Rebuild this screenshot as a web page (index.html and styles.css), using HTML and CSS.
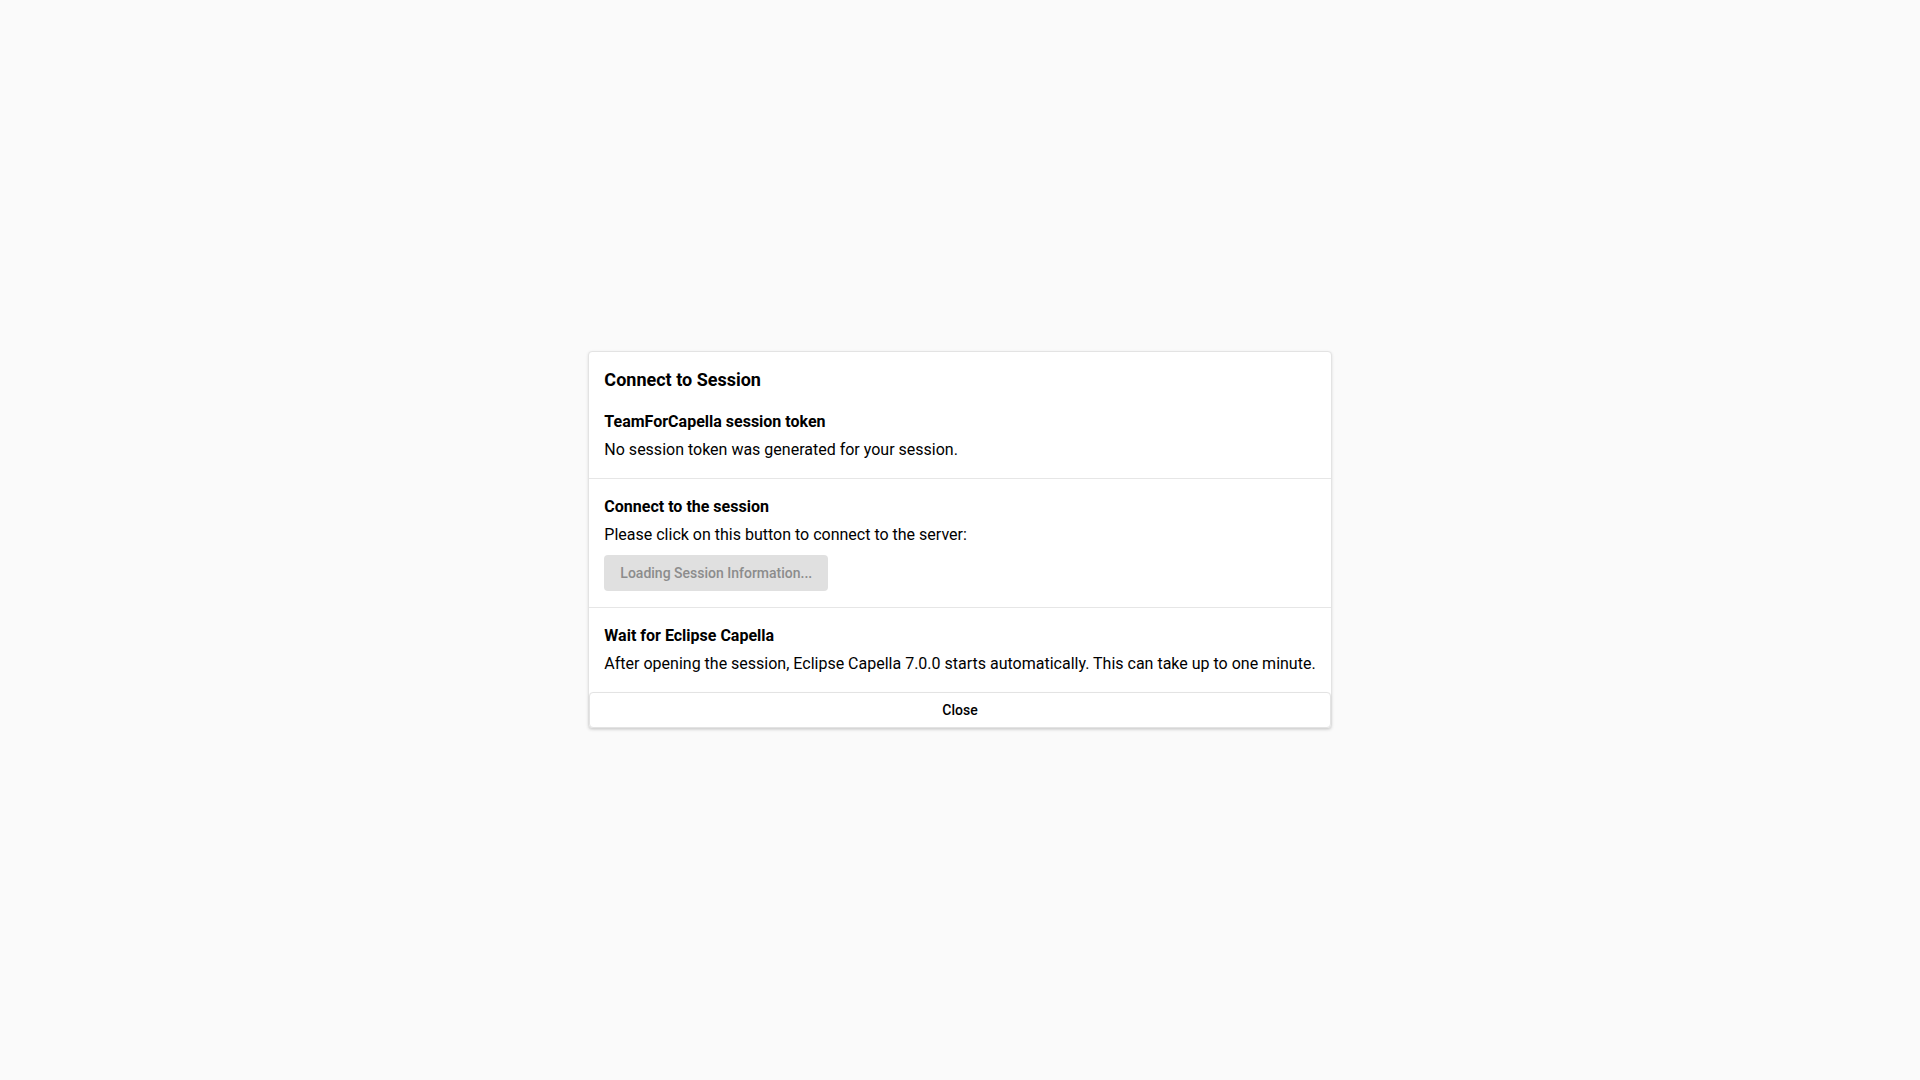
FILE: index.html
```html
<!DOCTYPE html>
<html lang="en">
<head>
<meta charset="utf-8">
<title>Connect to Session</title>
<link rel="stylesheet" href="styles.css">
</head>
<body>
<div class="dialog">
  <section class="section">
    <h1 class="title">Connect to Session</h1>
    <h2 class="heading">TeamForCapella session token</h2>
    <p class="text">No session token was generated for your session.</p>
  </section>
  <section class="section">
    <h2 class="heading">Connect to the session</h2>
    <p class="text">Please click on this button to connect to the server:</p>
    <button class="btn-loading" disabled>Loading Session Information...</button>
  </section>
  <section class="section section-last">
    <h2 class="heading">Wait for Eclipse Capella</h2>
    <p class="text">After opening the session, Eclipse Capella 7.0.0 starts automatically. This can take up to one minute.</p>
  </section>
  <button class="btn-close">Close</button>
</div>
</body>
</html>
```
FILE: styles.css
```css
html, body {
  margin: 0;
  padding: 0;
}
body {
  background: #fafafa;
  font-family: Roboto, "Liberation Sans", sans-serif;
  color: #000;
  min-height: 100vh;
  display: flex;
  align-items: center;
  justify-content: center;
}
.dialog {
  width: max-content;
  background: #fff;
  border: 1px solid #e3e3e3;
  border-radius: 4px;
  box-shadow: 0 1px 3px rgba(0,0,0,0.12);
  display: flex;
  flex-direction: column;
}
.section {
  padding: 16px 15px;
  border-bottom: 1px solid #e6e6e6;
}
.section-last {
  border-bottom: none;
}
.title {
  margin: 0 0 18px;
  font-size: 18px;
  font-weight: 700;
  line-height: 24px;
}
.heading {
  margin: 0 0 4px;
  font-size: 16px;
  font-weight: 700;
  line-height: 24px;
}
.text {
  margin: 0;
  font-size: 16px;
  line-height: 24px;
  white-space: nowrap;
}
.btn-loading {
  display: block;
  margin-top: 8px;
  height: 36px;
  padding: 0 16px;
  border: none;
  border-radius: 4px;
  background: #e0e0e0;
  color: #8c8c8c;
  font-family: Roboto, "Liberation Sans", sans-serif;
  font-size: 14px;
  font-weight: 500;
}
.btn-close {
  height: 36px;
  margin: 0;
  background: #fff;
  border: 1px solid #e3e3e3;
  border-radius: 4px;
  font-family: Roboto, "Liberation Sans", sans-serif;
  font-size: 14px;
  font-weight: 500;
  color: #000;
  box-shadow: 0 1px 2px rgba(0,0,0,0.08);
}
```
